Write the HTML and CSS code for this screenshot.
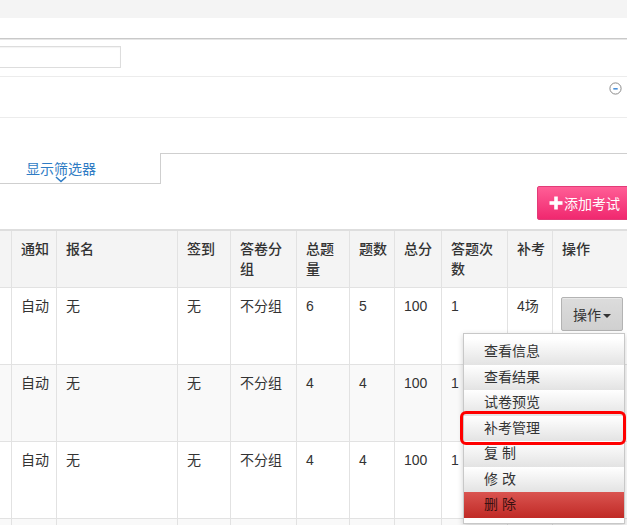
FILE: index.html
```html
<!DOCTYPE html>
<html lang="zh-CN">
<head>
    <meta charset="UTF-8">
    <title>考试管理</title>
    <link rel="stylesheet" href="styles.css">
</head>
<body>
    <div class="page">
        <div class="topbar"></div>
        <div class="nav"></div>

        <div class="search-row">
            <input type="text" class="search-input">
        </div>

        <div class="panel-head">
            <span class="collapse-icon">
                <svg width="13" height="13" viewBox="0 0 13 13">
                    <circle cx="6.5" cy="6.5" r="5.6" fill="#fff" stroke="#8a8a8a" stroke-width="1"/>
                    <rect x="4.3" y="6" width="4.4" height="1.6" fill="#4a90d9"/>
                </svg>
            </span>
        </div>

        <div class="filter-tabs">
            <div class="filter-tab">
                <a class="filter-link">显示筛选器</a>
                <svg class="chevron" width="12" height="7" viewBox="0 0 12 7">
                    <path d="M1 1 L6 5.5 L11 1" fill="none" stroke="#2f7cc4" stroke-width="1.6"/>
                </svg>
            </div>
            <div class="filter-rest"></div>
        </div>

        <div class="toolbar">
            <button class="btn-add">
                <svg width="14" height="14" viewBox="0 0 14 14">
                    <rect x="5.2" y="0.5" width="3.6" height="13" fill="#fff"/>
                    <rect x="0.5" y="5.2" width="13" height="3.6" fill="#fff"/>
                </svg>添加考试
            </button>
        </div>

        <table class="exam-table">
            <colgroup>
                <col style="width:51px">
                <col style="width:45px">
                <col style="width:121px">
                <col style="width:53px">
                <col style="width:66px">
                <col style="width:53px">
                <col style="width:45px">
                <col style="width:47px">
                <col style="width:66px">
                <col style="width:45px">
                <col style="width:120px">
            </colgroup>
            <thead>
                <tr>
                    <th></th>
                    <th>通知</th>
                    <th>报名</th>
                    <th>签到</th>
                    <th>答卷分组</th>
                    <th>总题量</th>
                    <th>题数</th>
                    <th>总分</th>
                    <th>答题次数</th>
                    <th>补考</th>
                    <th>操作</th>
                </tr>
            </thead>
            <tbody>
                <tr>
                    <td></td>
                    <td>自动</td>
                    <td>无</td>
                    <td>无</td>
                    <td>不分组</td>
                    <td>6</td>
                    <td>5</td>
                    <td>100</td>
                    <td>1</td>
                    <td>4场</td>
                    <td class="op-cell">
                        <div class="op-wrap">
                            <button class="btn-op">操作<span class="caret"></span></button>
                            <ul class="dropdown">
                                <li>查看信息</li>
                                <li>查看结果</li>
                                <li>试卷预览</li>
                                <li>补考管理</li>
                                <li>复 制</li>
                                <li>修 改</li>
                                <li class="danger">删 除</li>
                                <div class="mark"></div>
                            </ul>
                        </div>
                    </td>
                </tr>
                <tr class="alt">
                    <td></td>
                    <td>自动</td>
                    <td>无</td>
                    <td>无</td>
                    <td>不分组</td>
                    <td>4</td>
                    <td>4</td>
                    <td>100</td>
                    <td>1</td>
                    <td></td>
                    <td class="op-cell"><button class="btn-op">操作<span class="caret"></span></button></td>
                </tr>
                <tr>
                    <td></td>
                    <td>自动</td>
                    <td>无</td>
                    <td>无</td>
                    <td>不分组</td>
                    <td>4</td>
                    <td>4</td>
                    <td>100</td>
                    <td>1</td>
                    <td></td>
                    <td class="op-cell"><button class="btn-op">操作<span class="caret"></span></button></td>
                </tr>
                <tr class="alt">
                    <td></td><td></td><td></td><td></td><td></td><td></td>
                    <td></td><td></td><td></td><td></td><td></td>
                </tr>
            </tbody>
        </table>
    </div>
</body>
</html>
```

FILE: styles.css
```css
html, body {
    margin: 0;
    overflow: hidden;
}

body {
    font-family: "Liberation Sans", "Noto Sans CJK SC", sans-serif;
    font-size: 14px;
    color: #333;
    background: #fff;
}

.page {
    width: 640px;
}

.topbar {
    height: 18px;
    background: #f4f4f4;
}

.nav {
    height: 20px;
    border-bottom: 1px solid #c9c9c9;
    box-shadow: 0 1px 0 #e6e6e6;
}

.search-row {
    padding: 7px 0 8px;
    border-bottom: 1px solid #ececec;
}

.search-input {
    display: block;
    width: 160px;
    height: 22px;
    margin-left: -39px;
    box-sizing: border-box;
    border: 1px solid #ddd;
    box-shadow: inset 0 1px 1px rgba(0, 0, 0, 0.05);
}

.panel-head {
    height: 40px;
    border-bottom: 1px solid #ececec;
    display: flex;
    justify-content: flex-end;
    align-items: flex-start;
    padding-right: 18px;
}

.collapse-icon {
    display: block;
    margin-top: 5px;
}

.collapse-icon svg {
    display: block;
}

.filter-tabs {
    display: flex;
    margin-top: 35px;
    height: 31px;
}

.filter-tab {
    width: 160px;
    border-right: 1px solid #cfcfcf;
    border-bottom: 1px solid #cfcfcf;
}

.filter-link {
    display: block;
    padding: 7px 0 0 26px;
    line-height: 18px;
    color: #2f7cc4;
    font-size: 14px;
}

.chevron {
    display: block;
    margin: -2px 0 0 55px;
}

.filter-rest {
    flex: 1;
    border-top: 1px solid #cfcfcf;
}

.toolbar {
    display: flex;
    justify-content: flex-end;
    padding: 2px 8px 9px 0;
}

.btn-add {
    display: flex;
    align-items: center;
    gap: 1px;
    height: 34px;
    padding: 0 11px;
    border: 1px solid #e23b78;
    border-radius: 2px;
    background: linear-gradient(#ff5e96, #f0286f);
    color: #fff;
    font-family: "Liberation Sans", "Noto Sans CJK SC", sans-serif;
    font-size: 14px;
}

.exam-table {
    table-layout: fixed;
    border-collapse: collapse;
    width: 712px;
    margin-left: -40px;
    border-top: 2px solid #dedede;
}

.exam-table th,
.exam-table td {
    border: 1px solid #e2e2e2;
    padding: 8px 2px 8px 9px;
    line-height: 20px;
    text-align: left;
    vertical-align: top;
}

.exam-table th {
    background: #f4f4f4;
    font-weight: 500;
    height: 40px;
}

.exam-table td {
    height: 60px;
}

.exam-table td.op-cell {
    padding-left: 8px;
}

.exam-table tr.alt td {
    background: #f9f9f9;
}

.op-wrap {
    position: relative;
    display: inline-block;
}

.btn-op {
    height: 34px;
    width: 62px;
    padding: 0;
    margin-top: 1px;
    border: 1px solid #b3b3b3;
    border-radius: 2px;
    background: linear-gradient(#dcdcdc, #d0d0d0);
    box-shadow: inset 0 1px 0 #e8e8e8;
    color: #333;
    font-family: "Liberation Sans", "Noto Sans CJK SC", sans-serif;
    font-size: 14px;
}

.caret {
    display: inline-block;
    margin-left: 2px;
    vertical-align: middle;
    border-top: 4px solid #333;
    border-left: 4px solid transparent;
    border-right: 4px solid transparent;
}

.dropdown {
    position: absolute;
    top: 37px;
    right: -2px;
    z-index: 10;
    width: 162px;
    box-sizing: border-box;
    margin: 0;
    padding: 5px 0;
    list-style: none;
    background: #fff;
    border: 1px solid #c8c8c8;
    box-shadow: 0 2px 6px rgba(0, 0, 0, 0.18);
}

.dropdown li {
    height: 25.5px;
    line-height: 25.5px;
    padding-left: 20px;
    background: linear-gradient(#ffffff, #e3e3e3);
    color: #333;
    white-space: pre;
}

.dropdown li.danger {
    background: linear-gradient(#da5450, #c02a26);
    color: #3a1111;
}

.mark {
    position: absolute;
    top: 77px;
    left: -4px;
    width: 166px;
    height: 34px;
    box-sizing: border-box;
    border: 3px solid #f00;
    border-radius: 6px;
}
```
